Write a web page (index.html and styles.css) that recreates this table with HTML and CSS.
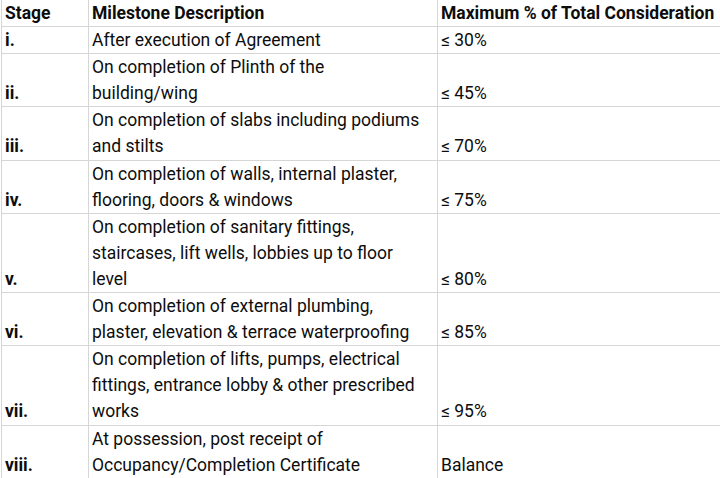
FILE: index.html
```html
<!DOCTYPE html>
<html>
<head>
<meta charset="utf-8">
<link rel="stylesheet" href="styles.css">
</head>
<body>
<table class="sheet">
  <colgroup>
    <col class="c-stage">
    <col class="c-desc">
    <col class="c-max">
  </colgroup>
  <tr class="head">
    <td>Stage</td>
    <td>Milestone Description</td>
    <td>Maximum % of Total Consideration</td>
  </tr>
  <tr>
    <td class="stage">i.</td>
    <td>After execution of Agreement</td>
    <td>≤ 30%</td>
  </tr>
  <tr>
    <td class="stage">ii.</td>
    <td>On completion of Plinth of the<br>building/wing</td>
    <td>≤ 45%</td>
  </tr>
  <tr>
    <td class="stage">iii.</td>
    <td>On completion of slabs including podiums<br>and stilts</td>
    <td>≤ 70%</td>
  </tr>
  <tr>
    <td class="stage">iv.</td>
    <td>On completion of walls, internal plaster,<br>flooring, doors &amp; windows</td>
    <td>≤ 75%</td>
  </tr>
  <tr>
    <td class="stage">v.</td>
    <td>On completion of sanitary fittings,<br>staircases, lift wells, lobbies up to floor<br>level</td>
    <td>≤ 80%</td>
  </tr>
  <tr>
    <td class="stage">vi.</td>
    <td>On completion of external plumbing,<br>plaster, elevation &amp; terrace waterproofing</td>
    <td>≤ 85%</td>
  </tr>
  <tr>
    <td class="stage">vii.</td>
    <td>On completion of lifts, pumps, electrical<br>fittings, entrance lobby &amp; other prescribed<br>works</td>
    <td>≤ 95%</td>
  </tr>
  <tr>
    <td class="stage">viii.</td>
    <td>At possession, post receipt of<br>Occupancy/Completion Certificate</td>
    <td>Balance</td>
  </tr>
</table>
</body>
</html>
```
FILE: styles.css
```css
html, body {
  margin: 0;
  padding: 0;
  background: #ffffff;
}
body {
  overflow: hidden;
  width: 720px;
  height: 478px;
}
.sheet {
  border-collapse: collapse;
  table-layout: fixed;
  width: 740px;
  margin-left: 1px;
  font-family: Roboto, "Liberation Sans", sans-serif;
  font-size: 17.5px;
  color: #0d0d0d;
}
.c-stage { width: 87px; }
.c-desc { width: 349px; }
.c-max { width: 304px; }
.sheet td {
  border-left: 1px solid #d6d6d6;
  border-bottom: 1px solid #d6d6d6;
  padding: 0 0 0 3px;
  line-height: 26.1px;
  vertical-align: bottom;
  white-space: nowrap;
}
.head td {
  font-weight: 700;
}
.stage {
  font-weight: 700;
}
```
